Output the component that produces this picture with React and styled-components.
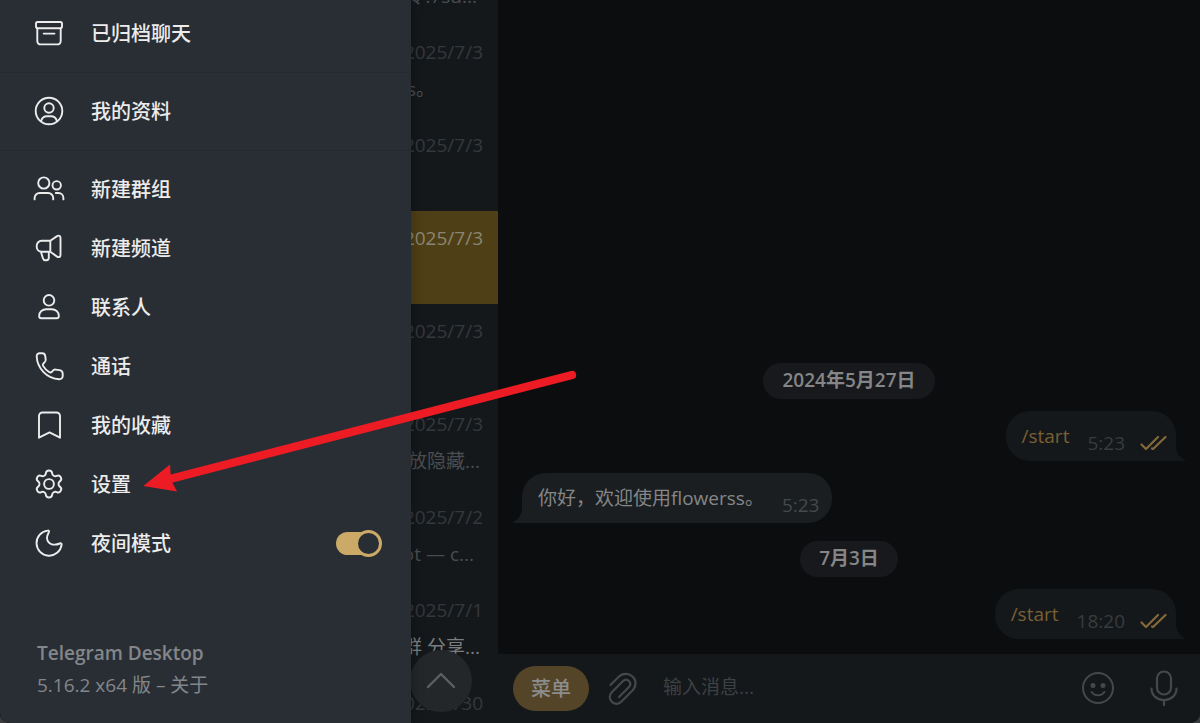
import React, { useState } from "react";
import styled, { createGlobalStyle } from "styled-components";

const GlobalStyle = createGlobalStyle`
  *, *::before, *::after {
    box-sizing: border-box;
  }

  body {
    margin: 0;
    background: #3a3b3c;
    font-family: "Open Sans", "Noto Sans CJK SC", sans-serif;
    font-size: 19px;
    line-height: 24px;
  }

  button, input {
    font: inherit;
    border: 0;
    padding: 0;
    background: none;
  }

  a {
    color: inherit;
    text-decoration: none;
  }
`;

const Window = styled.div`
  position: relative;
  display: flex;
  height: 100vh;
  overflow: hidden;
  border-radius: 0 0 10px 10px;
  background: #0b0d0e;
`;

/* chat list */

const Sidebar = styled.aside`
  position: relative;
  flex: none;
  width: 498px;
  overflow: hidden;
  background: #14181b;
`;

const ChatList = styled.ul`
  margin: -68px 0 0;
  padding: 0;
  list-style: none;
`;

const ChatItem = styled.li`
  display: flex;
  flex-direction: column;
  align-items: flex-end;
  gap: 13px;
  height: 93px;
  padding: 15px 15px 0 0;
  color: ${({ $active }) => ($active ? "#8b8672" : "#35383b")};
  background: ${({ $active }) => ($active ? "#4f3f16" : "transparent")};
`;

const Preview = styled.span`
  padding-right: ${({ $inset }) => $inset || 3}px;
  color: ${({ $bright }) => ($bright ? "#7b7d7e" : "#4a4d50")};
  white-space: nowrap;
`;

const ScrollTop = styled.button`
  position: absolute;
  right: 26px;
  bottom: 11px;
  display: grid;
  place-items: center;
  width: 62px;
  height: 62px;
  border-radius: 50%;
  background: #23272a;
  color: #5d6062;
`;

/* conversation */

const Conversation = styled.main`
  flex: 1;
  display: flex;
  flex-direction: column;
  min-width: 0;
`;

const Messages = styled.div`
  flex: 1;
  display: flex;
  flex-direction: column;
  justify-content: flex-end;
  gap: 12px;
  padding: 0 24px 15px;
`;

const DateBadge = styled.div`
  align-self: center;
  margin-top: 6px;
  padding: 5px 19px 7px;
  border-radius: 18px;
  background: #18191c;
  color: #858687;
  font-weight: 600;
`;

const Bubble = styled.div`
  position: relative;
  display: flex;
  align-self: ${({ $out }) => ($out ? "flex-end" : "flex-start")};
  gap: 18px;
  height: 50px;
  padding: 13px ${({ $out }) => ($out ? "9px" : "13px")} 0 16px;
  border-radius: ${({ $out }) => ($out ? "24px 24px 0 24px" : "24px 24px 24px 0")};
  background: ${({ $out }) => ($out ? "#14181b" : "#1a1e20")};
  color: ${({ $out }) => ($out ? "#7a5f34" : "#858687")};
`;

const Tail = styled.svg`
  position: absolute;
  bottom: 0;
  ${({ $out }) => ($out ? "left: 100%;" : "right: 100%; transform: scaleX(-1);")}
  fill: ${({ $out }) => ($out ? "#14181b" : "#1a1e20")};
`;

const Meta = styled.span`
  display: flex;
  align-items: center;
  gap: 15px;
  height: 24px;
  margin-top: 7px;
  color: ${({ $out }) => ($out ? "#383c3f" : "#45494b")};
`;

const Composer = styled.form`
  display: flex;
  align-items: center;
  height: 69px;
  padding: 0 20px 0 15px;
  background: #14181b;
  color: #424344;
`;

const MenuButton = styled.button`
  width: 76px;
  height: 45px;
  margin-right: 18px;
  border-radius: 23px;
  background: #554528;
  color: #8b8c8c;
  font-size: 20px;
  font-weight: 500;
`;

const IconButton = styled.button`
  display: grid;
  place-items: center;
  width: 32px;
  height: 40px;
  color: #464748;
`;

const MessageInput = styled.input`
  flex: 1;
  min-width: 0;
  margin-left: 24px;
  padding-bottom: 4px;
  outline: 0;
  color: #858687;

  &::placeholder {
    color: #3e4143;
    opacity: 1;
  }
`;

const ComposerActions = styled.div`
  display: flex;
  gap: 34px;
  padding-bottom: 1px;
`;

/* drawer */

const Drawer = styled.nav`
  position: absolute;
  top: 0;
  bottom: 0;
  left: 0;
  display: flex;
  flex-direction: column;
  width: 411px;
  padding-top: 4px;
  background: #292e34;
  color: #ececec;
  box-shadow: 0 0 12px rgba(0, 0, 0, 0.3);
`;

const DrawerRow = styled.button`
  display: flex;
  align-items: center;
  gap: 26px;
  width: 100%;
  height: 59px;
  padding: 0 29px 0 33px;
  color: inherit;
  font-size: 20px;
  font-weight: 500;
  text-align: left;
`;

const Divider = styled.hr`
  width: 100%;
  height: 1px;
  margin: 9px 0;
  border: 0;
  background: #262a2e;
`;

const Toggle = styled.input`
  appearance: none;
  display: grid;
  align-items: center;
  width: 46px;
  height: 27px;
  margin: 0 0 0 auto;

  &::before {
    content: "";
    grid-area: 1 / 1;
    width: 36px;
    height: 23px;
    border-radius: 12px;
    background: ${({ checked }) => (checked ? "#cbaa67" : "#5b6066")};
  }

  &::after {
    content: "";
    grid-area: 1 / 1;
    justify-self: ${({ checked }) => (checked ? "end" : "start")};
    width: 27px;
    height: 27px;
    border: 3px solid ${({ checked }) => (checked ? "#cbaa67" : "#5b6066")};
    border-radius: 50%;
    background: #292e34;
  }
`;

const DrawerFooter = styled.footer`
  margin-top: auto;
  padding: 0 37px 22px;
  color: #83868a;
  line-height: 32px;
`;

const AppName = styled.div`
  font-weight: 600;
`;

const Arrow = styled.svg`
  position: absolute;
  top: 364px;
  left: 140px;
  pointer-events: none;
`;

const StrokeIcon = styled.svg`
  flex: none;
  fill: none;
  stroke: currentColor;
  stroke-width: ${({ $weight }) => $weight || 1.9};
  stroke-linecap: round;
  stroke-linejoin: round;
`;

const ReadMark = styled(StrokeIcon)`
  color: #85683a;
`;

const icons = {
  archive: (
    <>
      <rect x="3" y="5" width="26" height="6.2" rx="1.6" />
      <path d="M4.3 11.2V24.2a3.2 3.2 0 0 0 3.2 3.2h17a3.2 3.2 0 0 0 3.2-3.2V11.2M10.7 16.6h10.8" />
    </>
  ),
  profile: (
    <>
      <circle cx="16" cy="16" r="13.3" />
      <circle cx="16" cy="13" r="4.7" />
      <path d="M8 26.4c.8-3.4 3-5.2 6-5.2h4c3 0 5.2 1.8 6 5.2" />
    </>
  ),
  group: (
    <>
      <circle cx="10.8" cy="10" r="5.6" />
      <circle cx="23.7" cy="12.3" r="4.2" />
      <path d="M1.6 26.4V25a5 5 0 0 1 5-5h8.6a5 5 0 0 1 5 5v1.4M22.8 20h2.6a5 5 0 0 1 5 5v1.4" />
    </>
  ),
  channel: (
    <path d="M17.3 8.8H8.7a5 5 0 0 0-5 5v1a5 5 0 0 0 5 5h8.6zl6.4-4.4c2-1.4 3.8-.7 3.8 1.5v17c0 2.2-1.8 2.9-3.8 1.5l-6.4-4.6M7.9 19.8l2 6.4c.4 1.4 1.2 2 2.5 2h1.1c1.4 0 2.3-1 2.3-2.4v-6" />
  ),
  contacts: (
    <>
      <circle cx="16" cy="9.3" r="5.3" />
      <path d="M6.2 24.8c0-4 3.3-6.6 7-6.6h5.6c3.7 0 7 2.6 7 6.6v.4a2 2 0 0 1-2 2H8.2a2 2 0 0 1-2-2z" />
    </>
  ),
  calls: (
    <path d="M3.7 6.2C3.7 4.2 5 3.3 6.7 3.3h2.5c1.7 0 2.8.9 3 2.6l.5 3.6c.2 1.4-.3 2.2-1.3 3l-.8.7c-1 .8-1.1 1.6-.5 2.7 1.6 2.8 3.6 4.8 6.2 6.2 1.1.6 1.9.5 2.7-.5l.7-.8c.8-1 1.6-1.4 3-1.2l3.8.5c1.9.3 3.2 1.5 3.2 3.4v2.4c0 2-1.4 3.4-3.5 3.3C14 28.5 4.2 18.5 3.7 6.2z" />
  ),
  saved: <path d="M6 28.7V7a3.5 3.5 0 0 1 3.5-3.5h14A3.5 3.5 0 0 1 27 7v21.7l-10.5-5.3z" />,
  settings: (
    <>
      <path
        transform="translate(16 16) scale(1.36) translate(-12 -12)"
        strokeWidth="1.4"
        d="M9.671 4.136a2.34 2.34 0 0 1 4.659 0 2.34 2.34 0 0 0 3.319 1.915 2.34 2.34 0 0 1 2.33 4.033 2.34 2.34 0 0 0 0 3.831 2.34 2.34 0 0 1-2.33 4.033 2.34 2.34 0 0 0-3.319 1.915 2.34 2.34 0 0 1-4.659 0 2.34 2.34 0 0 0-3.32-1.915 2.34 2.34 0 0 1-2.33-4.033 2.34 2.34 0 0 0 0-3.831A2.34 2.34 0 0 1 6.35 6.051a2.34 2.34 0 0 0 3.319-1.915"
      />
      <circle cx="16" cy="16" r="4.9" />
    </>
  ),
  night: (
    <path d="M14.6 3.6A12.6 12.6 0 1 0 28.6 17.9C29 16.4 28 16 26.8 16.5C21 18.9 14 17.5 14 10.6C14 8.6 15 7 15.9 5.2C16.4 4.1 15.8 3.4 14.6 3.6z" />
  ),
};

const chats = [
  { date: "2025/7/3", preview: "令!7su...", inset: 6 },
  { date: "2025/7/3", preview: "s。", inset: 48 },
  { date: "2025/7/3" },
  { date: "2025/7/3", active: true },
  { date: "2025/7/3" },
  { date: "2025/7/3", preview: "放隐藏..." },
  { date: "2025/7/2", preview: "ot — c...", inset: 9 },
  { date: "2025/7/1", preview: "群 分享...", bright: true },
  { date: "2025/6/30" },
];

const menuItems = [
  { icon: "group", label: "新建群组" },
  { icon: "channel", label: "新建频道" },
  { icon: "contacts", label: "联系人" },
  { icon: "calls", label: "通话" },
  { icon: "saved", label: "我的收藏" },
  { icon: "settings", label: "设置" },
];

function Icon({ name }) {
  return (
    <StrokeIcon width="32" height="33" viewBox="0 0 32 33" aria-hidden="true">
      {icons[name]}
    </StrokeIcon>
  );
}

function MenuRow({ icon, label }) {
  return (
    <DrawerRow type="button">
      <Icon name={icon} />
      {label}
    </DrawerRow>
  );
}

function Message({ out, time, children }) {
  return (
    <Bubble $out={out}>
      {out ? <a href="#start">{children}</a> : <span>{children}</span>}
      <Meta $out={out}>
        {time}
        {out && (
          <ReadMark $weight={2.2} width="27" height="16" viewBox="0 0 27 16" aria-hidden="true">
            <path d="M1.5 9.5l4.5 4.500L18 2M12 13.500l1 .5L25.500 2" />
          </ReadMark>
        )}
      </Meta>
      <Tail $out={out} width="9" height="24" viewBox="0 0 9 24">
        <path d="M0 0v24h9v-1C3 20.5 0 15 0 8z" />
      </Tail>
    </Bubble>
  );
}

function App() {
  const [nightMode, setNightMode] = useState(true);
  const [text, setText] = useState("");

  return (
    <>
      <GlobalStyle />
      <Window>
        <Sidebar>
          <ChatList>
            {chats.map((chat, i) => (
              <ChatItem key={i} $active={chat.active}>
                <span>{chat.date}</span>
                {chat.preview && (
                  <Preview $inset={chat.inset} $bright={chat.bright}>
                    {chat.preview}
                  </Preview>
                )}
              </ChatItem>
            ))}
          </ChatList>
          <ScrollTop type="button" aria-label="返回顶部">
            <StrokeIcon $weight={2.4} width="30" height="20" viewBox="0 0 30 20">
              <path d="M2 16L15 3l13 13" />
            </StrokeIcon>
          </ScrollTop>
        </Sidebar>

        <Conversation>
          <Messages>
            <DateBadge>2024年5月27日</DateBadge>
            <Message out time="5:23">/start</Message>
            <Message time="5:23">你好，欢迎使用flowerss。</Message>
            <DateBadge>7月3日</DateBadge>
            <Message out time="18:20">/start</Message>
          </Messages>
          <Composer onSubmit={(e) => e.preventDefault()}>
            <MenuButton type="button">菜单</MenuButton>
            <IconButton type="button" aria-label="附件">
              <StrokeIcon $weight={2.2} width="32" height="34" viewBox="0 0 32 34">
                <path d="M3.5 13L11.5 5C16 .5 22 1.5 25.5 4.5C29.5 8 29.5 14 26 18L14.5 29.5C11.5 32.5 7.5 32.5 5 30C2 27.5 2 23 5 20L15.5 9.5C18 7 20.5 7.5 22 9C24 11 23.5 13.5 21.5 15.5L12 25" />
              </StrokeIcon>
            </IconButton>
            <MessageInput
              aria-label="输入消息"
              placeholder="输入消息..."
              value={text}
              onChange={(e) => setText(e.target.value)}
            />
            <ComposerActions>
              <IconButton type="button" aria-label="表情">
                <StrokeIcon $weight={2} width="32" height="32" viewBox="0 0 32 32">
                  <circle cx="16" cy="16" r="15" />
                  <path d="M9.5 20c3 4.300 10 4.300 13 0" />
                  <circle cx="11" cy="13.500" r="1.500" fill="currentColor" />
                  <circle cx="21" cy="13.500" r="1.500" fill="currentColor" />
                </StrokeIcon>
              </IconButton>
              <IconButton type="button" aria-label="语音">
                <StrokeIcon $weight={2.2} width="28" height="36" viewBox="0 0 28 36">
                  <rect x="7" y="1.5" width="14" height="23" rx="7" />
                  <path d="M1.500 18.500c0 7 5.500 11.500 12.500 11.500s12.500-4.500 12.500-11.500M14 30v5" />
                </StrokeIcon>
              </IconButton>
            </ComposerActions>
          </Composer>
        </Conversation>

        <Drawer>
          <MenuRow icon="archive" label="已归档聊天" />
          <Divider />
          <MenuRow icon="profile" label="我的资料" />
          <Divider />
          {menuItems.map((item) => (
            <MenuRow key={item.icon} {...item} />
          ))}
          <DrawerRow as="label" htmlFor="night-mode">
            <Icon name="night" />
            夜间模式
            <Toggle
              id="night-mode"
              type="checkbox"
              checked={nightMode}
              onChange={(e) => setNightMode(e.target.checked)}
            />
          </DrawerRow>
          <DrawerFooter>
            <AppName>Telegram Desktop</AppName>
            <div>
              5.16.2 x64 版 – <a href="#about">关于</a>
            </div>
          </DrawerFooter>
        </Drawer>

        <Arrow width="444" height="136" viewBox="140 364 444 136" aria-hidden="true">
          <path d="M168 479.500L572 375" stroke="#ed1c24" strokeWidth="8.200" strokeLinecap="round" />
          <path d="M143.300 486L170 464.500L171 480L177 491.500z" fill="#ed1c24" />
        </Arrow>
      </Window>
    </>
  );
}

export default App;
